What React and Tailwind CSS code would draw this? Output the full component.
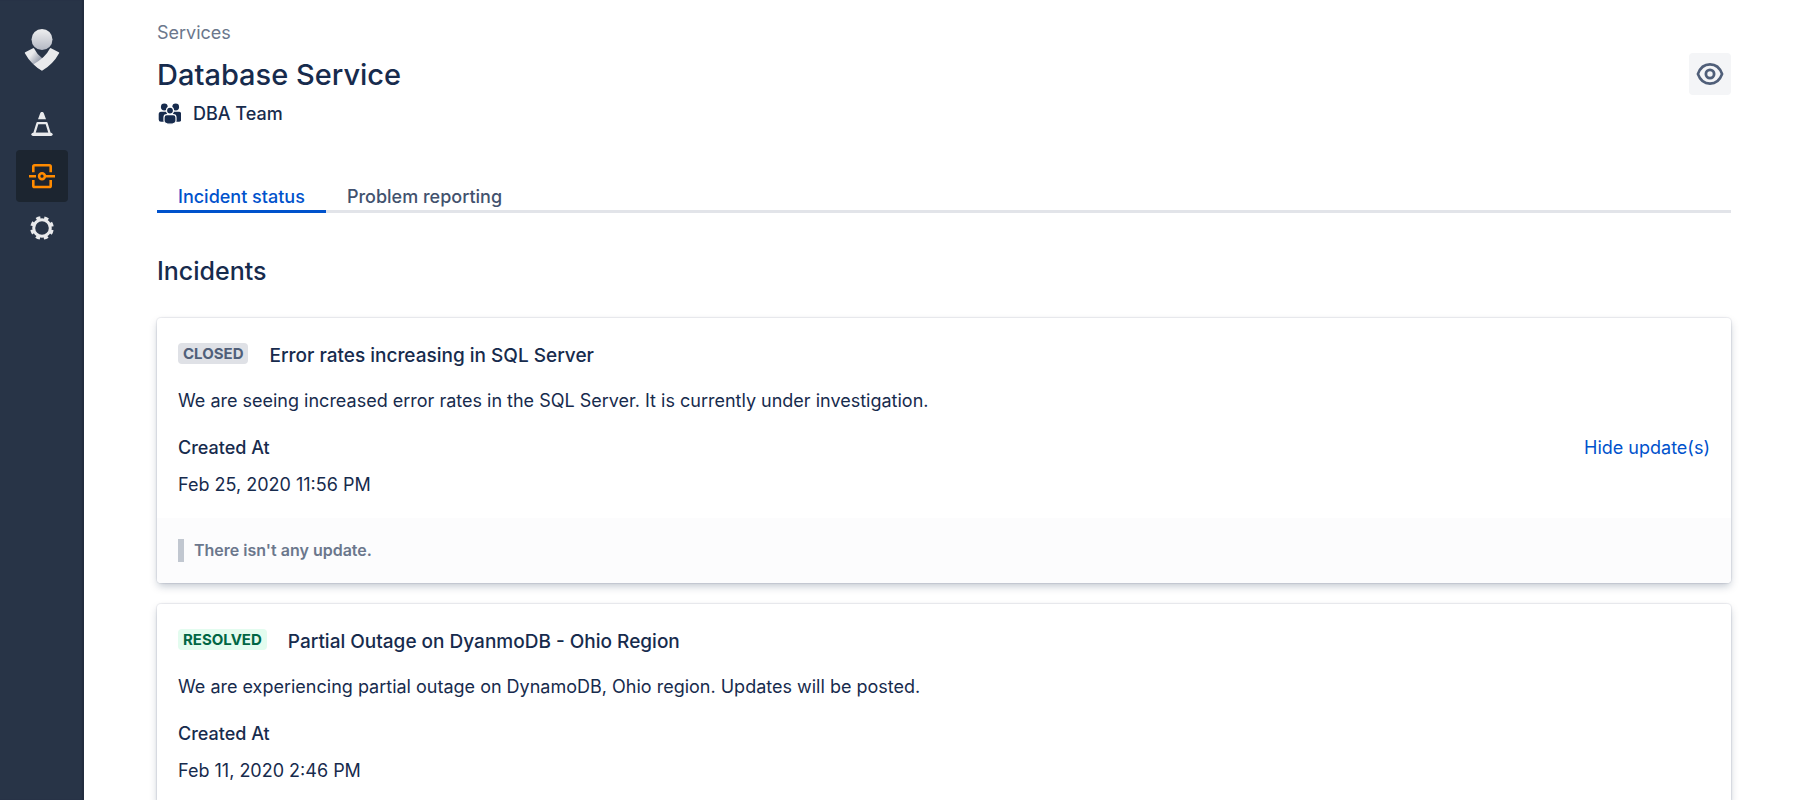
import { useState } from 'react';

const incidents = [
  {
    id: 1,
    status: 'CLOSED',
    title: 'Error rates increasing in SQL Server',
    message: 'We are seeing increased error rates in the SQL Server. It is currently under investigation.',
    createdAt: 'Feb 25, 2020 11:56 PM',
    expandable: true,
  },
  {
    id: 2,
    status: 'RESOLVED',
    title: 'Partial Outage on DyanmoDB - Ohio Region',
    message: 'We are experiencing partial outage on DynamoDB, Ohio region. Updates will be posted.',
    createdAt: 'Feb 11, 2020 2:46 PM',
    expandable: false,
  },
];

const badgeStyles = {
  CLOSED: 'bg-[#dfe1e6] text-[#505f79]',
  RESOLVED: 'bg-[#e3fcef] text-[#006644]',
};

function Logo() {
  return (
    <svg width="36" height="44" viewBox="0 0 36 44" aria-hidden="true">
      <defs>
        <linearGradient id="head" x1="0" y1="0" x2="0" y2="1">
          <stop offset="0.1" stopColor="#e9eaec" />
          <stop offset="1" stopColor="#b4b8c3" />
        </linearGradient>
        <linearGradient id="arm" x1="0.1" y1="0.2" x2="0.75" y2="0.75">
          <stop offset="0.25" stopColor="#e9eaec" />
          <stop offset="0.8" stopColor="#959cab" />
        </linearGradient>
      </defs>
      <circle cx="18" cy="11.5" r="10.5" fill="url(#head)" />
      <path d="M1.2 24.200 9 20.200q.7-.3 1.100.4Q13 26.600 18 30l4.500 3L18 42.600Q7 36.500.9 25.300q-.4-.8.3-1.100z" fill="url(#arm)" />
      <path d="M34.800 24.200 27 20.200q-.7-.3-1.100.4Q21.500 29.500 9.500 36.300 13.500 40.400 18 42.800 29 36.500 35.100 25.300q.4-.8-.3-1.100z" fill="#e9eaec" />
    </svg>
  );
}

function ConeIcon() {
  return (
    <svg width="24" height="28" viewBox="0 0 24 28" aria-hidden="true">
      <path d="M12 2c.9 0 1.500.4 1.800 1.300L16 9.300H8l2.200-6C10.500 2.400 11.100 2 12 2z" fill="currentColor" />
      <path d="M7.500 13.200h9l3.300 10.600H4.200z" fill="none" stroke="currentColor" strokeWidth="2.200" strokeLinejoin="round" />
      <path d="M3 24.300h18" stroke="currentColor" strokeWidth="3.200" strokeLinecap="round" />
    </svg>
  );
}

function ServicesIcon() {
  return (
    <svg width="28" height="28" viewBox="0 0 28 28" fill="none" stroke="currentColor" strokeWidth="2.600" aria-hidden="true">
      <path d="M5.300 10.300V4.600q0-1.300 1.300-1.300h14.800q1.300 0 1.300 1.300v5.700" />
      <path d="M5.300 18v5.700q0 1.300 1.300 1.300h14.800q1.300 0 1.300-1.300V18" />
      <path d="M1 14.200h7M18 14.200h9" />
      <circle cx="14" cy="14.200" r="2.900" />
    </svg>
  );
}

function GearIcon() {
  return (
    <svg width="26" height="26" viewBox="0 0 26 26" fill="none" stroke="currentColor" aria-hidden="true">
      <circle cx="13" cy="13" r="8.300" strokeWidth="3" />
      <circle cx="13" cy="13" r="10.300" strokeWidth="3" strokeDasharray="4.200 3.890" strokeDashoffset="6.150" />
    </svg>
  );
}

function EyeIcon() {
  return (
    <svg width="28" height="28" viewBox="0 0 28 28" fill="none" stroke="currentColor" strokeWidth="2.600" aria-hidden="true">
      <path d="M1.900 14C4.200 7.600 8.600 4.400 14 4.400S23.800 7.600 26.100 14C23.800 20.400 19.400 23.600 14 23.600S4.200 20.400 1.900 14z" strokeLinejoin="round" />
      <circle cx="14" cy="14" r="4.100" strokeWidth="2.800" />
    </svg>
  );
}

function TeamIcon() {
  return (
    <svg width="24" height="22" viewBox="-1 0 24 22" fill="currentColor" aria-hidden="true">
      <circle cx="6.300" cy="4" r="3.400" />
      <circle cx="17.700" cy="4" r="3.400" />
      <path d="M3 8.800h6v10H3q-2.300 0-2.300-2.300v-4.900Q.7 8.800 3 8.800zM21 8.800h-6v10h6q2.300 0 2.300-2.300v-4.900q0-2.800-2.300-2.800z" />
      <circle cx="12" cy="7.600" r="3.500" stroke="#fff" strokeWidth="1.200" />
      <path d="M8.800 11.700h6.400q2.800 0 2.800 2.800v3.300q0 3.400-6 3.400t-6-3.400v-3.300q0-2.800 2.800-2.800z" stroke="#fff" strokeWidth="1.200" />
    </svg>
  );
}

function Sidebar() {
  const items = [
    { label: 'Incidents', icon: <ConeIcon /> },
    { label: 'Services', icon: <ServicesIcon />, active: true },
    { label: 'Settings', icon: <GearIcon /> },
  ];

  return (
    <nav className="w-[84px] shrink-0 bg-[#283447] shadow-[inset_-2px_0_1px_#222d3f] flex flex-col items-center pt-7">
      <a href="#home" aria-label="Home" className="mb-[26px]">
        <Logo />
      </a>
      {items.map((item) => (
        <a
          key={item.label}
          href={`#${item.label.toLowerCase()}`}
          aria-label={item.label}
          className={`size-[52px] rounded flex items-center justify-center ${
            item.active ? 'bg-[#1c2530] text-[#ff8b00]' : 'text-[#e9eaec]'
          }`}
        >
          {item.icon}
        </a>
      ))}
    </nav>
  );
}

function IncidentCard({ incident }) {
  const [open, setOpen] = useState(incident.expandable);

  return (
    <article className="bg-white rounded overflow-hidden shadow-[0_0_1px_1px_rgba(9,30,66,0.08),0_4px_8px_-1px_rgba(9,30,66,0.25)]">
      <div className="px-[21px] pt-6 pb-[19px]">
        <div className="flex items-start gap-[21px]">
          <span className={`mt-px rounded px-[5px] text-[15px] leading-[21px] font-bold ${badgeStyles[incident.status]}`}>
            {incident.status}
          </span>
          <h3 className="text-[19px] leading-7 font-medium">{incident.title}</h3>
        </div>
        <p className="mt-[17px] text-lg leading-7">{incident.message}</p>
        <div className="mt-[19px] flex justify-between items-start">
          <dl className="text-lg leading-7">
            <dt className="font-medium">Created At</dt>
            <dd className="mt-[9px]">{incident.createdAt}</dd>
          </dl>
          {incident.expandable && (
            <button
              onClick={() => setOpen(!open)}
              className="text-lg leading-7 text-[#0052cc] hover:underline"
            >
              {open ? 'Hide update(s)' : 'Show update(s)'}
            </button>
          )}
        </div>
      </div>

      {open && (
        <div className="bg-[#fcfcfd] px-[21px] py-[21px]">
          <p className="border-l-[6px] border-[#c1c7d0] pl-[10px] text-base leading-[23px] font-semibold text-[#6b778c]">
            There isn't any update.
          </p>
        </div>
      )}
    </article>
  );
}

function App() {
  const [tab, setTab] = useState('Incident status');

  return (
    <div className="h-screen overflow-hidden flex bg-white text-[#172b4d] font-['Inter',sans-serif]">
      <Sidebar />

      <main className="flex-1 min-w-0 pl-[73px] pr-[69px] pt-[19px]">
        {/* Header */}
        <header className="flex justify-between items-start">
          <div>
            <a href="#services" className="block text-lg leading-7 text-[#6b778c]">
              Services
            </a>
            <h1 className="mt-[7px] text-[29px] leading-[42px] font-medium">Database Service</h1>
            <div className="mt-1 flex items-center gap-3 text-lg leading-7 font-medium">
              <TeamIcon />
              DBA Team
            </div>
          </div>
          <button
            aria-label="Watch service"
            className="mt-[34px] size-[42px] rounded bg-[#f4f5f7] text-[#505f79] flex items-center justify-center"
          >
            <EyeIcon />
          </button>
        </header>

        {/* Tabs */}
        <div role="tablist" className="mt-[52px] flex border-b-[3px] border-[#e2e4e9]">
          {['Incident status', 'Problem reporting'].map((name) => (
            <button
              key={name}
              role="tab"
              aria-selected={tab === name}
              onClick={() => setTab(name)}
              className={`-mb-[3px] px-[21px] pt-1 border-b-[3px] text-lg leading-[26px] font-medium ${
                tab === name ? 'border-[#0052cc] text-[#0052cc]' : 'border-transparent text-[#42526e]'
              }`}
            >
              {name}
            </button>
          ))}
        </div>

        {/* Incidents */}
        <h2 className="mt-10 text-[25px] leading-9 font-medium">Incidents</h2>
        <div className="mt-[29px] flex flex-col gap-[21px]">
          {incidents.map((incident) => (
            <IncidentCard key={incident.id} incident={incident} />
          ))}
        </div>
      </main>
    </div>
  );
}

export default App;
